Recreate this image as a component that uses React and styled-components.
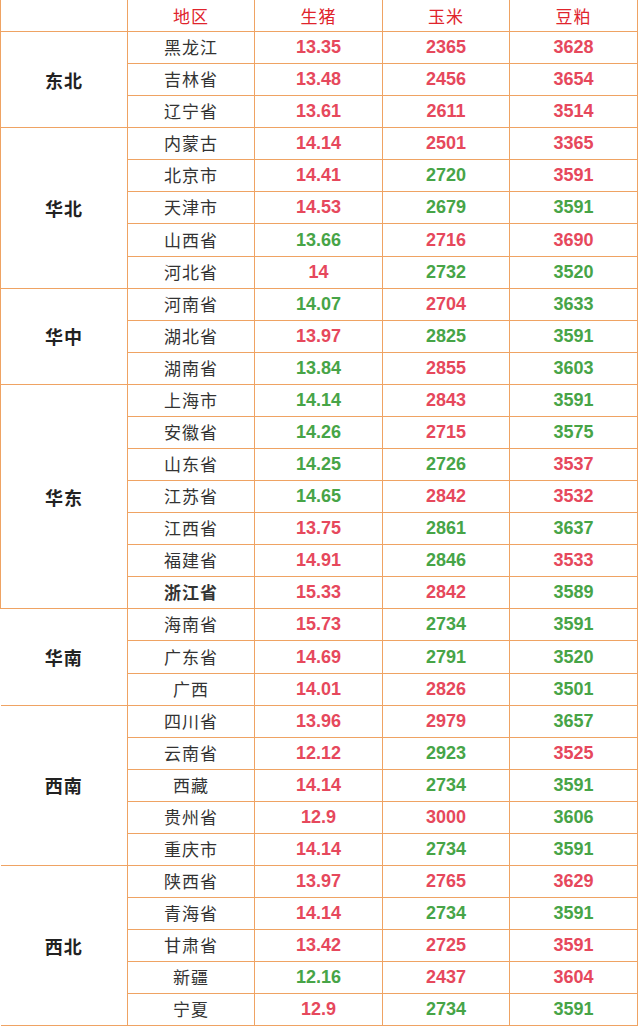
import React from "react";
import styled, { createGlobalStyle } from "styled-components";

const GlobalStyle = createGlobalStyle`
  html, body {
    margin: 0;
    padding: 0;
    background: #ffffff;
  }
`;

const LINE = "1.5px solid #efa363";
const RED = "#e6485c";
const GREEN = "#47a447";

const Table = styled.table`
  border-collapse: collapse;
  table-layout: fixed;
  width: 637px;
  font-family: "Noto Sans CJK SC", "Liberation Sans", sans-serif;
`;

const HeadCell = styled.th`
  height: 31px;
  padding: 0;
  border-right: ${LINE};
  border-bottom: ${LINE};
  border-left: ${(p) => (p.$edge ? LINE : "none")};
  color: #e0242c;
  font-size: 17px;
  font-weight: 400;
  text-align: center;
  vertical-align: middle;
  letter-spacing: 1px;
`;

const Row = styled.tr`
  height: 32.09px;
`;

const RegionCell = styled.td`
  padding: 0;
  border-right: ${LINE};
  border-bottom: ${LINE};
  border-left: ${(p) => (p.$edge ? LINE : "none")};
  color: #222;
  font-size: 18px;
  font-weight: 700;
  text-align: center;
  vertical-align: middle;
  letter-spacing: 1px;
`;

const NameCell = styled.td`
  padding: 0 0 2px;
  border-right: ${LINE};
  border-bottom: ${LINE};
  color: #333;
  font-size: 17px;
  font-weight: ${(p) => (p.$bold ? 700 : 400)};
  text-align: center;
  vertical-align: middle;
  letter-spacing: 1px;
`;

const NumCell = styled.td`
  padding: 0;
  border-right: ${LINE};
  border-bottom: ${LINE};
  color: ${(p) => (p.$up ? RED : GREEN)};
  font-family: "Liberation Sans", Arial, sans-serif;
  font-size: 18px;
  font-weight: 700;
  text-align: center;
  vertical-align: middle;
`;

// r = 红色(上涨), g = 绿色(下跌)
const regions = [
  {
    name: "东北",
    edge: true,
    rows: [
      ["黑龙江", "13.35", "r", "2365", "r", "3628", "r"],
      ["吉林省", "13.48", "r", "2456", "r", "3654", "r"],
      ["辽宁省", "13.61", "r", "2611", "r", "3514", "r"],
    ],
  },
  {
    name: "华北",
    edge: true,
    rows: [
      ["内蒙古", "14.14", "r", "2501", "r", "3365", "r"],
      ["北京市", "14.41", "r", "2720", "g", "3591", "r"],
      ["天津市", "14.53", "r", "2679", "g", "3591", "g"],
      ["山西省", "13.66", "g", "2716", "r", "3690", "r"],
      ["河北省", "14", "r", "2732", "g", "3520", "g"],
    ],
  },
  {
    name: "华中",
    edge: true,
    rows: [
      ["河南省", "14.07", "g", "2704", "r", "3633", "g"],
      ["湖北省", "13.97", "r", "2825", "g", "3591", "g"],
      ["湖南省", "13.84", "g", "2855", "r", "3603", "g"],
    ],
  },
  {
    name: "华东",
    edge: true,
    rows: [
      ["上海市", "14.14", "g", "2843", "r", "3591", "g"],
      ["安徽省", "14.26", "g", "2715", "r", "3575", "g"],
      ["山东省", "14.25", "g", "2726", "g", "3537", "r"],
      ["江苏省", "14.65", "g", "2842", "r", "3532", "r"],
      ["江西省", "13.75", "r", "2861", "g", "3637", "g"],
      ["福建省", "14.91", "r", "2846", "g", "3533", "r"],
      ["浙江省", "15.33", "r", "2842", "r", "3589", "g", true],
    ],
  },
  {
    name: "华南",
    rows: [
      ["海南省", "15.73", "r", "2734", "g", "3591", "g"],
      ["广东省", "14.69", "r", "2791", "g", "3520", "g"],
      ["广西", "14.01", "r", "2826", "r", "3501", "g"],
    ],
  },
  {
    name: "西南",
    rows: [
      ["四川省", "13.96", "r", "2979", "r", "3657", "g"],
      ["云南省", "12.12", "r", "2923", "g", "3525", "r"],
      ["西藏", "14.14", "r", "2734", "g", "3591", "g"],
      ["贵州省", "12.9", "r", "3000", "r", "3606", "g"],
      ["重庆市", "14.14", "r", "2734", "g", "3591", "g"],
    ],
  },
  {
    name: "西北",
    rows: [
      ["陕西省", "13.97", "r", "2765", "r", "3629", "r"],
      ["青海省", "14.14", "r", "2734", "g", "3591", "g"],
      ["甘肃省", "13.42", "r", "2725", "r", "3591", "r"],
      ["新疆", "12.16", "g", "2437", "r", "3604", "r"],
      ["宁夏", "12.9", "r", "2734", "g", "3591", "g"],
    ],
  },
];

function App() {
  return (
    <>
      <GlobalStyle />
      <Table>
        <colgroup>
          <col style={{ width: 127 }} />
          <col style={{ width: 127 }} />
          <col style={{ width: 128 }} />
          <col style={{ width: 127 }} />
          <col style={{ width: 128 }} />
        </colgroup>
        <thead>
          <tr>
            <HeadCell $edge />
            <HeadCell>地区</HeadCell>
            <HeadCell>生猪</HeadCell>
            <HeadCell>玉米</HeadCell>
            <HeadCell>豆粕</HeadCell>
          </tr>
        </thead>
        <tbody>
          {regions.map((region) =>
            region.rows.map((r, i) => (
              <Row key={region.name + r[0]}>
                {i === 0 && (
                  <RegionCell rowSpan={region.rows.length} $edge={region.edge}>
                    {region.name}
                  </RegionCell>
                )}
                <NameCell $bold={r[7]}>{r[0]}</NameCell>
                <NumCell $up={r[2] === "r"}>{r[1]}</NumCell>
                <NumCell $up={r[4] === "r"}>{r[3]}</NumCell>
                <NumCell $up={r[6] === "r"}>{r[5]}</NumCell>
              </Row>
            ))
          )}
        </tbody>
      </Table>
    </>
  );
}

export default App;
